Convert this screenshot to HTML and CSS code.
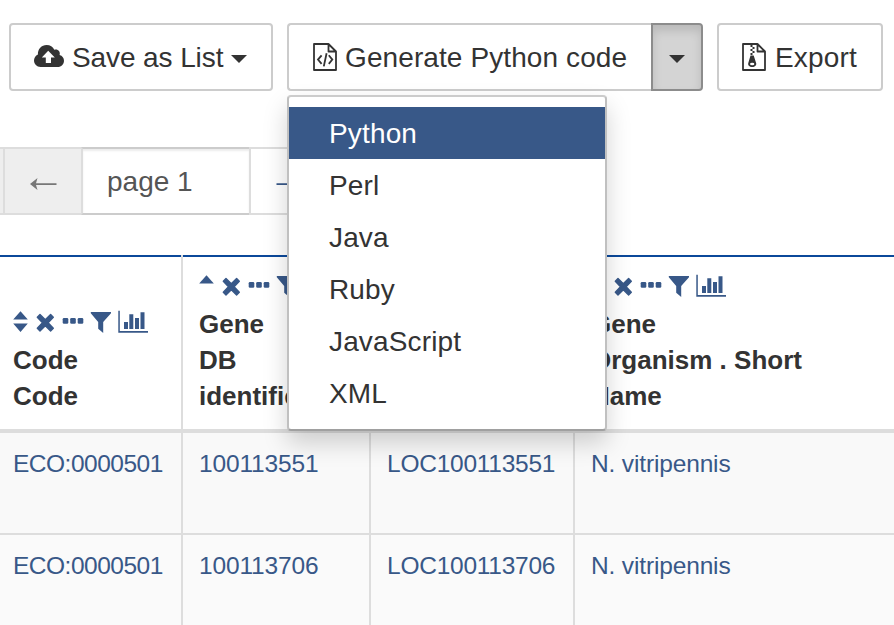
FILE: index.html
```
<!DOCTYPE html>
<html lang="en">
<head>
<meta charset="utf-8">
<title>Results table</title>
<link rel="stylesheet" href="styles.css">
</head>
<body>
<svg class="defs" width="0" height="0" aria-hidden="true">
  <symbol id="tools" viewBox="0 0 136 24">
    <path d="M24.300 7.200 27 4.500l5.300 5.200L37.600 4.500l2.700 2.700-5.200 5.500 5.200 5.500-2.700 2.700-5.300-5.200-5.300 5.200-2.700-2.700 5.200-5.500z" stroke="currentColor" stroke-width="1.400" stroke-linejoin="round"/>
    <rect x="49.700" y="8" width="5.600" height="5.700" rx="1.300"/>
    <rect x="57.200" y="8" width="5.600" height="5.700" rx="1.300"/>
    <rect x="64.700" y="8" width="5.600" height="5.700" rx="1.300"/>
    <path d="M77.800 2h20.200v1.200l-7.800 8.800v11l-5-4.300V12l-7.400-8.800z"/>
    <path d="M105.300.700h1.500V21H135v1.700h-29.700zM111 12h4v6.900h-4zM116.300 4.300h4v14.600h-4zM122 8h4v10.900h-4zM127.500 2.300h4v16.600h-4z"/>
  </symbol>
  <symbol id="up" viewBox="0 0 15 24"><path d="M7.500 1.300 14.800 9.500H.200z"/></symbol>
  <symbol id="updown" viewBox="0 0 15 24"><path d="M7.500 1.300 14.800 9.500H.200zM.200 13.600h14.600L7.500 22z"/></symbol>
</svg>

<div class="toolbar">
  <button class="btn save">
    <svg class="cloud" viewBox="0 0 30 22"><path fill-rule="evenodd" d="M6.500 22C2.800 22 0 19 0 15.500c0-2.600 1.500-4.800 3.900-6C3.700 4 7.500 0 12.600 0c3.500 0 6.400 1.900 7.700 4.800 3.100-1.300 6.500 1.600 5.300 5.100C28.400 10.600 30 13 30 15.700 30 19.200 27.200 22 23.700 22zM14.200 5.700 7.800 12.500h4V18H17v-5.500h3.800z"/></svg>
    <span class="label">Save as List</span>
    <svg class="caret" viewBox="0 0 16 8"><path d="M0 0h16L8 8z"/></svg>
  </button>
  <div class="group">
    <button class="btn generate">
      <svg class="file outline" viewBox="0 0 24 28"><path d="M15.500 1H1v26h22V8.500zV8.500H23" stroke-linejoin="round"/><path d="M8.600 12.300 5 16.600l3.600 4.300M15.800 12.300l3.500 4.300-3.500 4.300M13.600 10.300l-2.800 13.100"/></svg>
      <span class="label">Generate Python code</span>
    </button>
    <button class="btn toggle" aria-label="Choose language">
      <svg class="caret" viewBox="0 0 16 8"><path d="M0 0h16L8 8z"/></svg>
    </button>
    <ul class="menu">
      <li class="active">Python</li>
      <li>Perl</li>
      <li>Java</li>
      <li>Ruby</li>
      <li>JavaScript</li>
      <li>XML</li>
    </ul>
  </div>
  <button class="btn export">
    <svg class="file" viewBox="0 0 24 28"><path d="M15.500 1H1v26h22V8.500zV8.500H23" fill="none" stroke="currentColor" stroke-width="1.800" stroke-linejoin="round"/><path d="M8.500 2h2v2h-2zM10.500 4h2v2h-2zM8.500 6h2v2h-2zM10.500 8h2v2h-2zM8.500 10h2v2h-2zM8.500 12.500h3.200l2.400 7.500c.800 2.300-1.200 4-3.900 4s-4.700-1.700-3.900-4z"/><ellipse cx="10.200" cy="21" rx="2.200" ry="1.300" fill="#fff"/></svg>
    <span class="label">Export</span>
  </button>
</div>

<nav class="pager">
  <span class="edge"></span>
  <span class="prev"><svg class="arrow" viewBox="0 0 27 14"><path d="M0 7 7.500 1 6 6.200h20.500v1.900H6L7.500 13z"/></svg></span>
  <span class="current">page 1</span>
  <span class="next"><svg class="arrow flip" viewBox="0 0 27 14"><path d="M0 7 7.500 1 6 6.200h20.500v1.900H6L7.500 13z"/></svg></span>
</nav>

<table class="results">
  <colgroup><col class="c1"><col class="c2"><col class="c3"><col class="c4"></colgroup>
  <thead>
    <tr>
      <th><div class="icons"><svg class="sort"><use href="#updown"/></svg><svg class="tools"><use href="#tools"/></svg></div>Code<br>Code</th>
      <th><div class="icons"><svg class="sort"><use href="#up"/></svg><svg class="tools"><use href="#tools"/></svg></div>Gene<br>DB<br>identifier</th>
      <th></th>
      <th><div class="icons"><svg class="sort"><use href="#updown"/></svg><svg class="tools"><use href="#tools"/></svg></div>Gene<br>Organism . Short<br>Name</th>
    </tr>
  </thead>
  <tbody>
    <tr><td>ECO:0000501</td><td>100113551</td><td>LOC100113551</td><td>N. vitripennis</td></tr>
    <tr><td>ECO:0000501</td><td>100113706</td><td>LOC100113706</td><td>N. vitripennis</td></tr>
  </tbody>
</table>
</body>
</html>
```
FILE: styles.css
```
* { box-sizing: border-box; }

body {
  margin: 0;
  width: 894px;
  height: 625px;
  overflow: hidden;
  background: #fff;
  color: #333;
  font-family: "Liberation Sans", Arial, sans-serif;
  font-size: 28px;
}

svg { display: block; flex: none; fill: currentColor; }
.defs { position: absolute; }
.outline { fill: none; stroke: currentColor; stroke-width: 1.8px; }

.toolbar {
  display: flex;
  gap: 14px;
  padding: 23px 0 0 9px;
}

.btn {
  display: flex;
  align-items: center;
  height: 68px;
  margin: 0;
  padding: 0 0 0 23px;
  border: 2px solid #ccc;
  border-radius: 4px;
  background: #fff;
  color: #333;
  font: inherit;
  line-height: 40px;
  white-space: nowrap;
}

.label { padding-top: 2px; }

.save { width: 264px; }
.save .label { letter-spacing: -0.1px; }
.cloud { width: 30px; height: 22px; margin: 0 8px 2px 0; }
.caret { width: 16px; height: 8px; }
.save .caret { margin: 4px 0 0 8px; }

.group { position: relative; display: flex; }
.generate { width: 365px; border-right: 0; border-radius: 4px 0 0 4px; padding-left: 24px; }
.file { width: 24px; height: 28px; margin-right: 8px; }
.generate .label { letter-spacing: 0.1px; }

.toggle {
  width: 52px;
  margin-left: -1px;
  padding: 4px 0 0 16px;
  border-color: #8c8c8c;
  border-radius: 0 4px 4px 0;
  background: #d4d4d4;
  box-shadow: inset 0 6px 10px rgba(0, 0, 0, .125);
}

.export { width: 166px; }
.export .label { padding-left: 1px; letter-spacing: 0.15px; }

.menu {
  position: absolute;
  top: 72px;
  left: 0;
  z-index: 2;
  width: 320px;
  margin: 0;
  padding: 10px 0;
  border: 2px solid;
  border-color: #ccc #c0c0c0 #a0a0a0;
  border-radius: 4px;
  background: #fff;
  box-shadow: 0 12px 24px rgba(0, 0, 0, .175);
  list-style: none;
}

.menu li { height: 52px; padding-left: 40px; line-height: 54px; letter-spacing: 0.15px; }
.menu .active { background: #385888; color: #fff; }

.pager {
  display: flex;
  height: 68px;
  margin-top: 56px;
}

.pager span {
  display: flex;
  align-items: center;
  border: 2px solid #ddd;
  border-width: 2px 0 2px 2px;
}

.pager .edge { width: 3px; border-left: 0; background: #eee; }
.pager .prev { width: 78px; padding: 5px 0 0 25px; background: #eee; color: #777; }
.pager .current {
  width: 168px;
  padding: 2px 0 0 24px;
  border-top-color: #ccc;
  border-bottom-color: #ccc;
  box-shadow: inset 0 2px 2px rgba(0, 0, 0, .075);
  color: #555;
}
.pager .next { width: 78px; padding: 5px 0 0 25px; color: #385888; }
.arrow { width: 27px; height: 14px; }
.flip { transform: scaleX(-1); }

.results {
  width: 894px;
  margin-top: 40px;
  border-spacing: 0;
  table-layout: fixed;
}

.c1 { width: 183px; }
.c2 { width: 188px; }
.c3 { width: 204px; }
.c4 { width: 319px; }

th {
  height: 178px;
  padding: 0 0 15px 16px;
  border-right: 2px solid #ddd;
  border-bottom: 4px solid #ddd;
  background: linear-gradient(#0b489a, #0b489a) 0 0 / 100% 2px no-repeat;
  font-size: 26px;
  line-height: 36px;
  text-align: left;
  vertical-align: bottom;
}

td {
  height: 102px;
  padding: 14px 0 0 16px;
  border-right: 2px solid #ddd;
  border-bottom: 2px solid #ddd;
  background: #f9f9f9;
  color: #385888;
  font-size: 24.5px;
  line-height: 34px;
  letter-spacing: -0.15px;
  vertical-align: top;
}

th:first-child, td:first-child { padding-left: 13px; }
td:first-child { letter-spacing: -0.5px; }
td:nth-child(3) { letter-spacing: -0.25px; }
th:last-child, td:last-child { border-right: 0; }
tr:last-child td { background: #fafafa; }

.icons { display: flex; height: 36px; padding-top: 4px; color: #385888; }
.sort { width: 15px; height: 24px; }
.tools { width: 136px; height: 24px; margin-left: -15px; }
```
